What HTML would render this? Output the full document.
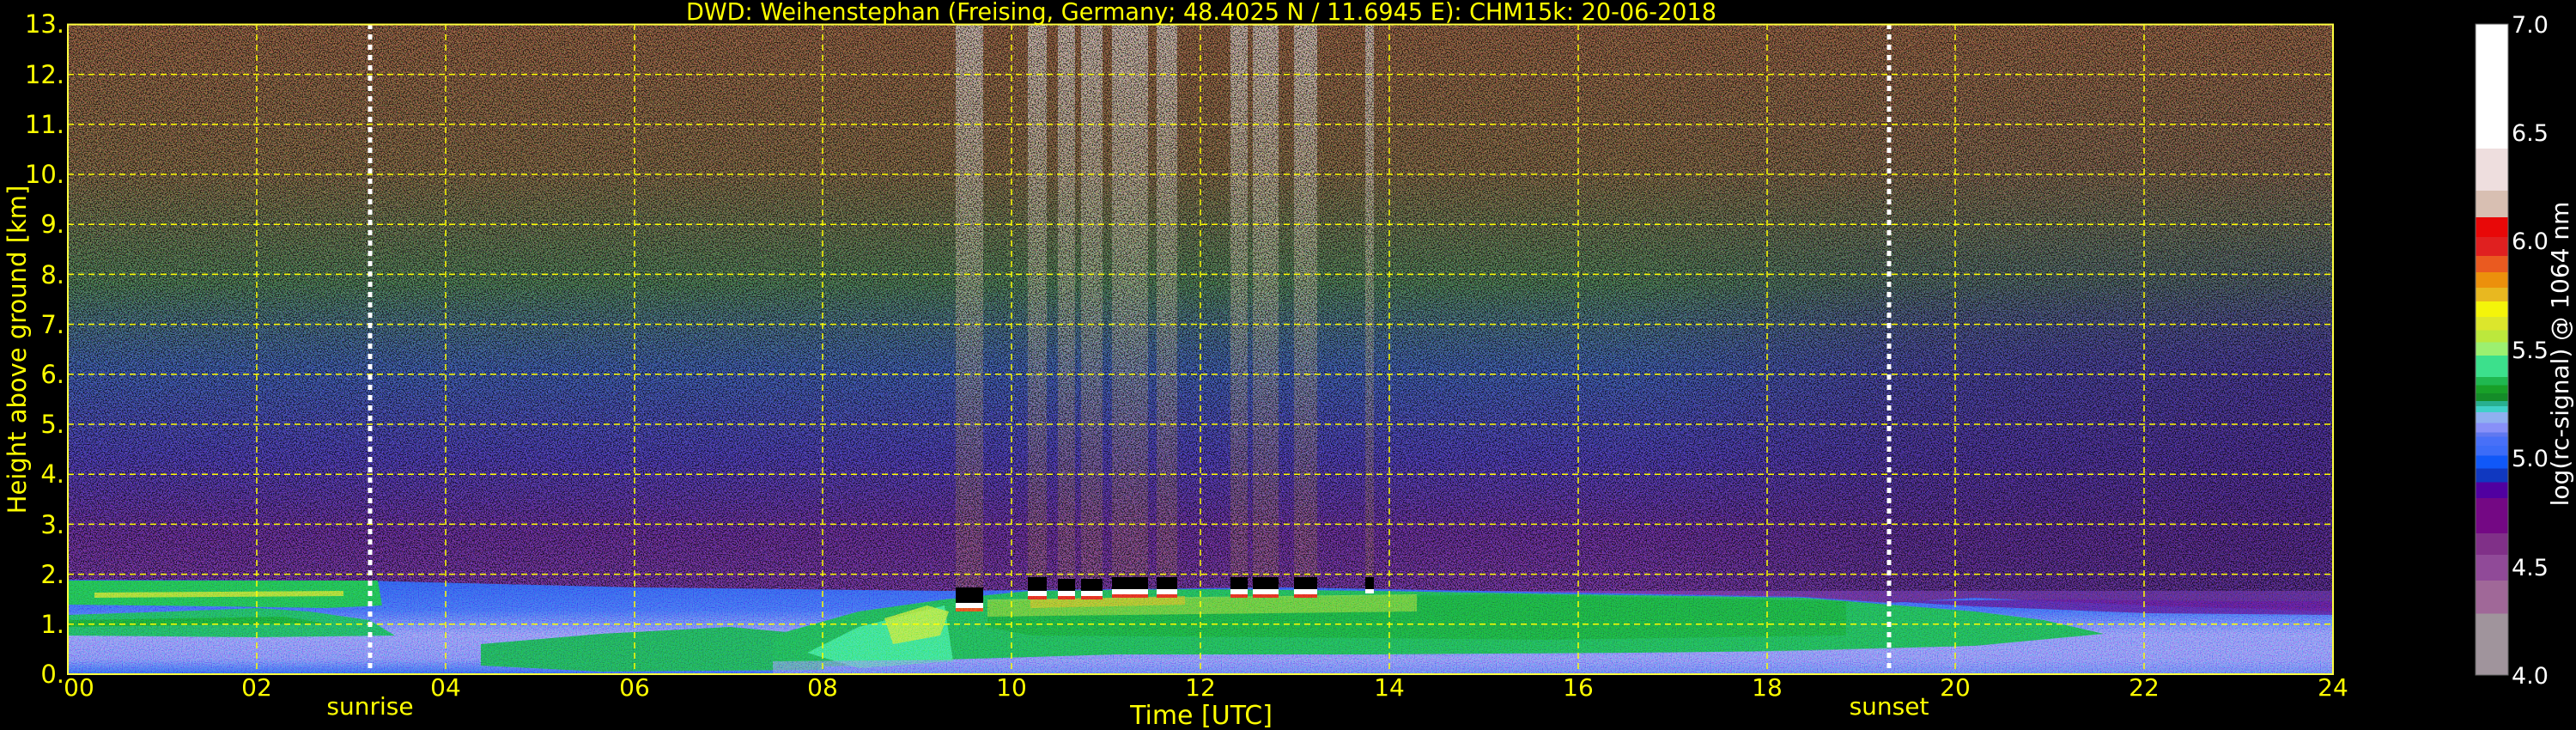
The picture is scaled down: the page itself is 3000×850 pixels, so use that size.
<!DOCTYPE html>
<html><head><meta charset="utf-8"><style>
html,body{margin:0;padding:0;background:#000;width:3000px;height:850px;overflow:hidden}
svg{display:block}
text{font-family:"DejaVu Sans","Liberation Sans",sans-serif}
</style></head><body>
<svg width="3000" height="850" viewBox="0 0 3000 850" xmlns="http://www.w3.org/2000/svg">
<defs>
<linearGradient id="sky" x1="0" y1="28" x2="0" y2="700" gradientUnits="userSpaceOnUse">
<stop offset="0" stop-color="#8a5c40"/>
<stop offset="0.25" stop-color="#7a6242"/>
<stop offset="0.45" stop-color="#4a7452"/>
<stop offset="0.6" stop-color="#3c58a8"/>
<stop offset="0.75" stop-color="#4a3cb0"/>
<stop offset="0.88" stop-color="#642e96"/>
<stop offset="1" stop-color="#70369c"/>
</linearGradient>
<linearGradient id="skyR" x1="1900" y1="0" x2="2717" y2="0" gradientUnits="userSpaceOnUse">
<stop offset="0" stop-color="#4a2a80" stop-opacity="0"/>
<stop offset="0.4" stop-color="#4a2a80" stop-opacity="0.5"/>
<stop offset="1" stop-color="#4a2680" stop-opacity="0.7"/>
</linearGradient>
<linearGradient id="skyRv" x1="0" y1="28" x2="0" y2="700" gradientUnits="userSpaceOnUse">
<stop offset="0" stop-color="#fff" stop-opacity="0"/>
<stop offset="0.35" stop-color="#fff" stop-opacity="0.2"/>
<stop offset="0.6" stop-color="#fff" stop-opacity="1"/>
<stop offset="1" stop-color="#fff" stop-opacity="1"/>
</linearGradient>
<mask id="mR"><rect x="79" y="28" width="2638" height="680" fill="url(#skyRv)"/></mask>
<linearGradient id="bl" x1="0" y1="670" x2="0" y2="785" gradientUnits="userSpaceOnUse">
<stop offset="0" stop-color="#2c58e8"/>
<stop offset="0.35" stop-color="#4068f0"/>
<stop offset="0.6" stop-color="#8890f0"/>
<stop offset="0.85" stop-color="#7a86f0"/>
<stop offset="1" stop-color="#3464f0"/>
</linearGradient>
<linearGradient id="streak" x1="0" y1="28" x2="0" y2="690" gradientUnits="userSpaceOnUse">
<stop offset="0" stop-color="#ffffff" stop-opacity="0.5"/>
<stop offset="0.5" stop-color="#e0d0b0" stop-opacity="0.35"/>
<stop offset="0.8" stop-color="#c8a040" stop-opacity="0.25"/>
<stop offset="1" stop-color="#c8a040" stop-opacity="0.2"/>
</linearGradient>
<linearGradient id="cb" x1="0" y1="28" x2="0" y2="786" gradientUnits="userSpaceOnUse">
<stop offset="0" stop-color="#ffffff"/><stop offset="0.191" stop-color="#ffffff"/>
<stop offset="0.191" stop-color="#eedede"/><stop offset="0.256" stop-color="#eedede"/>
<stop offset="0.256" stop-color="#d8bfb2"/><stop offset="0.297" stop-color="#d8bfb2"/>
<stop offset="0.297" stop-color="#e80808"/><stop offset="0.327" stop-color="#e80808"/>
<stop offset="0.327" stop-color="#e02020"/><stop offset="0.356" stop-color="#e02020"/>
<stop offset="0.356" stop-color="#ea5a20"/><stop offset="0.381" stop-color="#ea5a20"/>
<stop offset="0.381" stop-color="#ec900c"/><stop offset="0.405" stop-color="#ec900c"/>
<stop offset="0.405" stop-color="#e8b820"/><stop offset="0.426" stop-color="#e8b820"/>
<stop offset="0.426" stop-color="#f4f40a"/><stop offset="0.450" stop-color="#f4f40a"/>
<stop offset="0.450" stop-color="#dce62c"/><stop offset="0.470" stop-color="#dce62c"/>
<stop offset="0.470" stop-color="#bce83c"/><stop offset="0.489" stop-color="#bce83c"/>
<stop offset="0.489" stop-color="#9cf070"/><stop offset="0.509" stop-color="#9cf070"/>
<stop offset="0.509" stop-color="#3ce08c"/><stop offset="0.542" stop-color="#3ce08c"/>
<stop offset="0.542" stop-color="#20b850"/><stop offset="0.555" stop-color="#20b850"/>
<stop offset="0.555" stop-color="#18a028"/><stop offset="0.567" stop-color="#18a028"/>
<stop offset="0.567" stop-color="#148c28"/><stop offset="0.579" stop-color="#148c28"/>
<stop offset="0.579" stop-color="#28b090"/><stop offset="0.587" stop-color="#28b090"/>
<stop offset="0.587" stop-color="#40d0c8"/><stop offset="0.596" stop-color="#40d0c8"/>
<stop offset="0.596" stop-color="#90b0f0"/><stop offset="0.613" stop-color="#90b0f0"/>
<stop offset="0.613" stop-color="#8890f8"/><stop offset="0.627" stop-color="#8890f8"/>
<stop offset="0.627" stop-color="#6078f0"/><stop offset="0.634" stop-color="#6078f0"/>
<stop offset="0.634" stop-color="#4870f8"/><stop offset="0.648" stop-color="#4870f8"/>
<stop offset="0.648" stop-color="#3c6cf8"/><stop offset="0.663" stop-color="#3c6cf8"/>
<stop offset="0.663" stop-color="#1058f8"/><stop offset="0.683" stop-color="#1058f8"/>
<stop offset="0.683" stop-color="#1038c0"/><stop offset="0.704" stop-color="#1038c0"/>
<stop offset="0.704" stop-color="#5000a0"/><stop offset="0.728" stop-color="#5000a0"/>
<stop offset="0.728" stop-color="#740884"/><stop offset="0.782" stop-color="#740884"/>
<stop offset="0.782" stop-color="#803088"/><stop offset="0.815" stop-color="#803088"/>
<stop offset="0.815" stop-color="#904a98"/><stop offset="0.855" stop-color="#904a98"/>
<stop offset="0.855" stop-color="#a06898"/><stop offset="0.906" stop-color="#a06898"/>
<stop offset="0.906" stop-color="#a0949c"/><stop offset="1" stop-color="#a0949c"/>
</linearGradient>
<filter id="noise" x="0" y="0" width="100%" height="100%">
<feTurbulence type="fractalNoise" baseFrequency="0.8" numOctaves="1" seed="3" result="t"/>
<feColorMatrix in="t" type="matrix" values="3 0 0 0 -1  0 3 0 0 -1  0 0 3 0 -1  0 0 0 0 1"/>
</filter>
<filter id="dark" x="0" y="0" width="100%" height="100%">
<feTurbulence type="fractalNoise" baseFrequency="0.75" numOctaves="1" seed="7" result="t"/>
<feColorMatrix in="t" type="matrix" values="0 0 0 0 0  0 0 0 0 0  0 0 0 0 0  5 0 0 0 -2.2"/>
</filter>
</defs>

<!-- sky -->
<rect x="79" y="28" width="2638" height="757" fill="url(#sky)"/>
<rect x="79" y="28" width="2638" height="680" fill="url(#skyR)" mask="url(#mR)"/>

<!-- streaks -->
<g fill="url(#streak)">
<rect x="1113" y="28" width="32" height="660"/>
<rect x="1197" y="28" width="22" height="650"/>
<rect x="1232" y="28" width="20" height="650"/>
<rect x="1259" y="28" width="25" height="650"/>
<rect x="1295" y="28" width="42" height="650"/>
<rect x="1347" y="28" width="24" height="650"/>
<rect x="1433" y="28" width="20" height="650"/>
<rect x="1459" y="28" width="30" height="650"/>
<rect x="1507" y="28" width="27" height="650"/>
<rect x="1590" y="28" width="10" height="650"/>
</g>

<!-- dark noise over sky -->
<rect x="79" y="28" width="2638" height="660" filter="url(#dark)" opacity="0.75"/>

<!-- boundary layer base -->
<path d="M79 675 L420 676 L740 684 L1100 688 L1500 684 L1835 690 L2100 695 L2200 702 L2300 696 L2500 705 L2717 712 L2717 785 L79 785 Z" fill="url(#bl)"/>
<path d="M2200 700 L2400 698 L2600 700 L2717 700 L2717 716 L2500 714 L2300 706 Z" fill="#5a1c90" opacity="0.8"/>
<!-- left green layers -->
<path d="M79 676 L440 676 L445 705 L380 708 L250 706 L79 704 Z" fill="#20b850"/>
<path d="M110 690 L400 688 L400 694 L110 696 Z" fill="#dce62c" opacity="0.7"/>
<path d="M79 716 L200 712 L300 708 L360 712 L430 722 L460 740 L300 742 L79 740 Z" fill="#20b060"/>
<path d="M79 722 L330 718 L380 726 L79 730 Z" fill="#18a028" opacity="0.7"/>
<path d="M560 750 L700 738 L850 730 L960 740 L960 780 L700 782 L560 775 Z" fill="#20a858"/>
<!-- mid green -->
<path d="M900 740 L1000 712 L1100 698 L1200 688 L1400 686 L1600 688 L1835 692 L2100 696 L2200 704 L2300 712 L2380 722 L2450 738 L2300 752 L2100 758 L1900 760 L1600 762 L1300 762 L1100 768 L1000 775 L900 778 Z" fill="#20b055"/>
<path d="M1150 700 L1750 692 L2150 700 L2150 740 L1800 745 L1500 742 L1200 740 L1150 730 Z" fill="#18a030" opacity="0.55"/>
<path d="M940 760 L1000 730 L1060 715 L1100 705 L1110 770 L1000 778 Z" fill="#3ce08c"/>
<path d="M1030 720 L1080 705 L1105 712 L1095 740 L1040 750 Z" fill="#bce83c" opacity="0.8"/>
<path d="M1150 698 L1650 692 L1650 712 L1150 718 Z" fill="#bce83c" opacity="0.45"/>
<path d="M1200 698 L1380 694 L1380 704 L1200 708 Z" fill="#e8b820" opacity="0.5"/>
<path d="M900 770 L1900 762 L2300 752 L2717 748 L2717 785 L900 785 Z" fill="#8890f0" opacity="0.6"/>

<!-- cloud bases -->
<g>
<rect x="1113" y="684" width="32" height="18" fill="#000"/><rect x="1113" y="702" width="32" height="6" fill="#fff"/><rect x="1113" y="708" width="32" height="4" fill="#e05020"/>
<rect x="1197" y="672" width="22" height="16" fill="#000"/><rect x="1197" y="688" width="22" height="6" fill="#fff"/><rect x="1197" y="694" width="22" height="4" fill="#e03020"/>
<rect x="1232" y="674" width="20" height="14" fill="#000"/><rect x="1232" y="688" width="20" height="6" fill="#fff"/><rect x="1232" y="694" width="20" height="4" fill="#e03020"/>
<rect x="1259" y="674" width="25" height="14" fill="#000"/><rect x="1259" y="688" width="25" height="6" fill="#fff"/><rect x="1259" y="694" width="25" height="4" fill="#e03020"/>
<rect x="1295" y="672" width="42" height="14" fill="#000"/><rect x="1295" y="686" width="42" height="6" fill="#fff"/><rect x="1295" y="692" width="42" height="4" fill="#e03020"/>
<rect x="1347" y="672" width="24" height="14" fill="#000"/><rect x="1347" y="686" width="24" height="6" fill="#fff"/><rect x="1347" y="692" width="24" height="4" fill="#e03020"/>
<rect x="1433" y="672" width="20" height="14" fill="#000"/><rect x="1433" y="686" width="20" height="6" fill="#fff"/><rect x="1433" y="692" width="20" height="4" fill="#e03020"/>
<rect x="1459" y="672" width="30" height="14" fill="#000"/><rect x="1459" y="686" width="30" height="6" fill="#fff"/><rect x="1459" y="692" width="30" height="4" fill="#e03020"/>
<rect x="1507" y="672" width="27" height="14" fill="#000"/><rect x="1507" y="686" width="27" height="6" fill="#fff"/><rect x="1507" y="692" width="27" height="4" fill="#e03020"/>
<rect x="1590" y="672" width="10" height="14" fill="#000"/><rect x="1590" y="686" width="10" height="5" fill="#fff"/>
</g>

<!-- noise texture -->
<rect x="79" y="28" width="2638" height="757" filter="url(#noise)" opacity="0.35" style="mix-blend-mode:overlay"/>

<!-- grid -->
<g stroke="#ffff00" stroke-width="1.5" stroke-dasharray="7,5" fill="none">
<line x1="79" y1="86.6" x2="2717" y2="86.6"/>
<line x1="79" y1="144.8" x2="2717" y2="144.8"/>
<line x1="79" y1="203" x2="2717" y2="203"/>
<line x1="79" y1="261.2" x2="2717" y2="261.2"/>
<line x1="79" y1="319.4" x2="2717" y2="319.4"/>
<line x1="79" y1="377.6" x2="2717" y2="377.6"/>
<line x1="79" y1="435.8" x2="2717" y2="435.8"/>
<line x1="79" y1="494" x2="2717" y2="494"/>
<line x1="79" y1="552.2" x2="2717" y2="552.2"/>
<line x1="79" y1="610.4" x2="2717" y2="610.4"/>
<line x1="79" y1="668.6" x2="2717" y2="668.6"/>
<line x1="79" y1="726.8" x2="2717" y2="726.8"/>
<line x1="79" y1="785" x2="2717" y2="785"/>
<line x1="299" y1="28" x2="299" y2="785"/>
<line x1="519" y1="28" x2="519" y2="785"/>
<line x1="739" y1="28" x2="739" y2="785"/>
<line x1="958" y1="28" x2="958" y2="785"/>
<line x1="1178" y1="28" x2="1178" y2="785"/>
<line x1="1398" y1="28" x2="1398" y2="785"/>
<line x1="1618" y1="28" x2="1618" y2="785"/>
<line x1="1838" y1="28" x2="1838" y2="785"/>
<line x1="2058" y1="28" x2="2058" y2="785"/>
<line x1="2277" y1="28" x2="2277" y2="785"/>
<line x1="2497" y1="28" x2="2497" y2="785"/>
</g>
<g stroke="#ffffff" stroke-width="5" stroke-dasharray="6,6">
<line x1="431" y1="28" x2="431" y2="785"/>
<line x1="2200" y1="28" x2="2200" y2="785"/>
</g>
<rect x="79" y="28.5" width="2638" height="756.5" fill="none" stroke="#ffff40" stroke-width="2"/>

<!-- title -->
<text x="1399" y="23" font-size="28" fill="#ffff00" text-anchor="middle" textLength="1200" lengthAdjust="spacingAndGlyphs">DWD: Weihenstephan (Freising, Germany; 48.4025 N / 11.6945 E):    CHM15k: 20-06-2018</text>

<!-- y tick labels -->
<g font-size="29" fill="#ffff00" text-anchor="end">
<text x="75" y="38">13.</text>
<text x="75" y="97">12.</text>
<text x="75" y="155">11.</text>
<text x="75" y="213">10.</text>
<text x="75" y="271">9.</text>
<text x="75" y="330">8.</text>
<text x="75" y="388">7.</text>
<text x="75" y="446">6.</text>
<text x="75" y="504">5.</text>
<text x="75" y="562">4.</text>
<text x="75" y="621">3.</text>
<text x="75" y="679">2.</text>
<text x="75" y="737">1.</text>
<text x="75" y="795">0.</text>
</g>
<text transform="translate(30,407) rotate(-90)" font-size="29" fill="#ffff00" text-anchor="middle">Height above ground [km]</text>

<!-- x tick labels -->
<g font-size="28" fill="#ffff00" text-anchor="middle">
<text x="92" y="810">00</text>
<text x="299" y="810">02</text>
<text x="519" y="810">04</text>
<text x="739" y="810">06</text>
<text x="958" y="810">08</text>
<text x="1178" y="810">10</text>
<text x="1398" y="810">12</text>
<text x="1618" y="810">14</text>
<text x="1838" y="810">16</text>
<text x="2058" y="810">18</text>
<text x="2277" y="810">20</text>
<text x="2497" y="810">22</text>
<text x="2717" y="810">24</text>
</g>
<text x="431" y="832" font-size="28" fill="#ffff00" text-anchor="middle">sunrise</text>
<text x="2200" y="832" font-size="28" fill="#ffff00" text-anchor="middle">sunset</text>
<text x="1399" y="843" font-size="30" fill="#ffff00" text-anchor="middle">Time [UTC]</text>

<!-- colorbar -->
<rect x="2883" y="28" width="38" height="758" fill="url(#cb)" stroke="#666" stroke-width="1"/>
<g font-size="27" fill="#ffffff">
<text x="2925" y="38">7.0</text>
<text x="2925" y="164">6.5</text>
<text x="2925" y="290">6.0</text>
<text x="2925" y="417">5.5</text>
<text x="2925" y="543">5.0</text>
<text x="2925" y="670">4.5</text>
<text x="2925" y="796">4.0</text>
</g>
<text transform="translate(2991,412) rotate(-90)" font-size="28" fill="#ffffff" text-anchor="middle">log(rc-signal) @ 1064 nm</text>
</svg>
</body></html>
